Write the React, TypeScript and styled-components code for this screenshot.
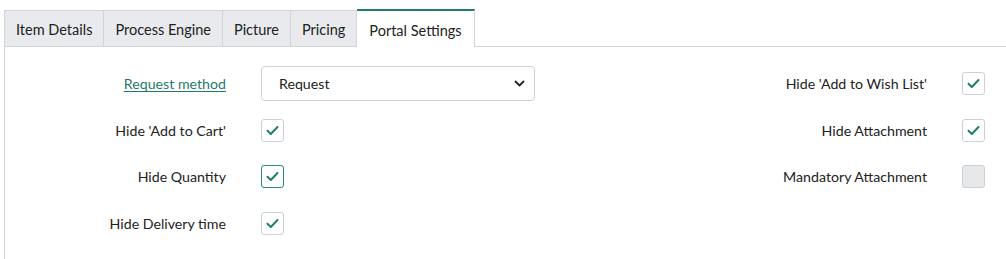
import React from "react";
import styled, { createGlobalStyle, css } from "styled-components";

const GlobalStyle = createGlobalStyle`
  html, body {
    margin: 0;
    padding: 0;
    background: #ffffff;
  }
  body {
    font-family: Lato, "Open Sans", Arial, sans-serif;
    color: #222;
  }
`;

const Page = styled.div`
  width: 1006px;
  height: 259px;
  padding: 9px 0 0 4px;
  box-sizing: border-box;
  overflow: hidden;
`;

const TabBar = styled.div`
  display: flex;
  align-items: flex-end;
  height: 37px;
`;

const Tab = styled.div<{ active?: boolean }>`
  height: 36px;
  padding: 1px 11px 0;
  display: flex;
  align-items: center;
  font-size: 14.5px;
  color: #222;
  background: #e8eaed;
  border: 1px solid #d2d5d8;
  border-bottom: none;
  border-left: none;
  box-sizing: border-box;

  &:first-child {
    border-left: 1px solid #d2d5d8;
  }

  ${props => props.active && css`
    background: #ffffff;
    border-top: 2px solid #1e7f6c;
    margin-bottom: -1px;
    height: 38px;
    padding: 2px 12px 0;
  `}
`;

const Panel = styled.div`
  border-top: 1px solid #d2d5d8;
  border-left: 1px solid #d2d5d8;
  height: 220px;
  padding: 19px 21px 0 0;
  box-sizing: border-box;
  display: grid;
  grid-template-columns: 221px 274px 1fr auto 23px;
  grid-auto-rows: 35px;
  column-gap: 35px;
  row-gap: 11.5px;
  align-items: center;
`;

const Label = styled.div`
  font-size: 14.2px;
  text-align: right;
  color: #222;
  white-space: nowrap;
`;

const LinkLabel = styled.a`
  font-size: 14.2px;
  color: #1f7a6c;
  text-decoration: underline;
  text-underline-offset: 2px;
  justify-self: end;
  cursor: pointer;
`;

const Select = styled.div`
  height: 35px;
  border: 1px solid #cfd2d5;
  border-radius: 4px;
  display: flex;
  align-items: center;
  justify-content: space-between;
  padding: 0 9px 0 17px;
  box-sizing: border-box;
  font-size: 14.2px;
  color: #222;
`;

const Box = styled.div<{ focused?: boolean; empty?: boolean }>`
  width: 23px;
  height: 23px;
  box-sizing: border-box;
  border: 1px solid ${props => (props.focused ? "#2a8a79" : "#cdd0d3")};
  border-radius: 3px;
  background: ${props => (props.empty ? "#e6e8ea" : "#ffffff")};
  display: flex;
  align-items: center;
  justify-content: center;
`;

const Spacer = styled.div``;

const Check: React.FC<{ focused?: boolean; checked?: boolean }> = ({ focused, checked = true }) => (
  <Box focused={focused} empty={!checked}>
    {checked && (
      <svg width="13" height="11" viewBox="0 0 13 11">
        <path d="M1.5 5.8 L4.8 9 L11.5 2" fill="none" stroke="#1e7f6c" strokeWidth="2" strokeLinecap="round" strokeLinejoin="round" />
      </svg>
    )}
  </Box>
);

const Chevron = () => (
  <svg width="11" height="7" viewBox="0 0 11 7">
    <path d="M1.5 1.5 L5.5 5.5 L9.5 1.5" fill="none" stroke="#222" strokeWidth="1.8" strokeLinecap="round" strokeLinejoin="round" />
  </svg>
);

const tabs = ["Item Details", "Process Engine", "Picture", "Pricing", "Portal Settings"];

export default function App() {
  return (
    <Page>
      <GlobalStyle />
      <TabBar>
        {tabs.map(t => (
          <Tab key={t} active={t === "Portal Settings"}>{t}</Tab>
        ))}
      </TabBar>
      <Panel>
        <LinkLabel>Request method</LinkLabel>
        <Select>
          <span>Request</span>
          <Chevron />
        </Select>
        <Spacer />
        <Label>Hide 'Add to Wish List'</Label>
        <Check />

        <Label>Hide 'Add to Cart'</Label>
        <div><Check /></div>
        <Spacer />
        <Label>Hide Attachment</Label>
        <Check />

        <Label>Hide Quantity</Label>
        <div><Check focused /></div>
        <Spacer />
        <Label>Mandatory Attachment</Label>
        <Check checked={false} />

        <Label>Hide Delivery time</Label>
        <div><Check /></div>
        <Spacer />
        <Spacer />
        <Spacer />
      </Panel>
    </Page>
  );
}
